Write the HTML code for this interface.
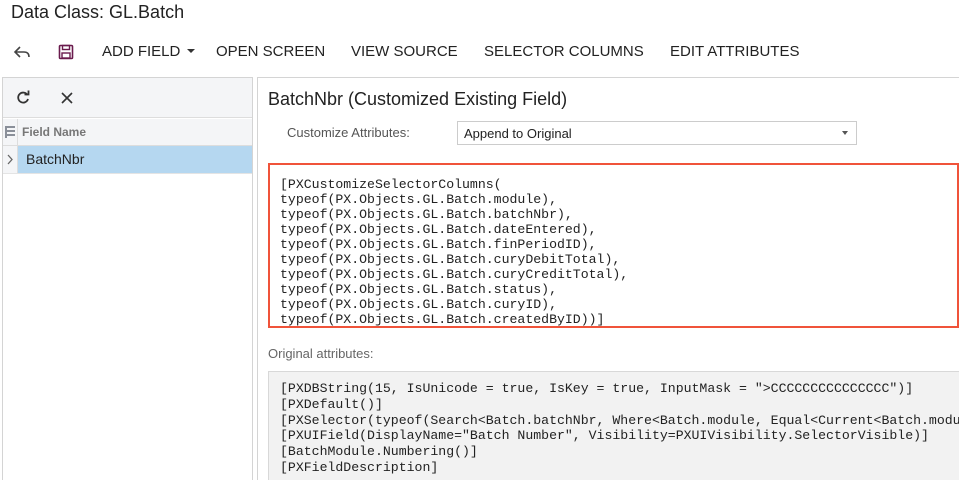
<!DOCTYPE html>
<html><head><style>
*{margin:0;padding:0;box-sizing:border-box}
html,body{width:959px;height:480px;overflow:hidden}
body{background:#fff;font-family:"Liberation Sans",Arial,sans-serif;color:#222;position:relative}
.a{position:absolute;white-space:nowrap}
.tb{font-size:15px;color:#222;top:43px}
.mono{font-family:"Liberation Mono","Courier New",monospace;font-size:13.2px;line-height:15px;white-space:pre;color:#222}
</style></head><body>
<div class="a" style="left:11px;top:2px;font-size:18px;color:#222">Data Class: GL.Batch</div>
<svg class="a" style="left:13px;top:44px" width="20" height="16" viewBox="0 0 20 16"><path d="M7 3 L2 8 L7 13 M2 8 H11 Q16 8 16 13" fill="none" stroke="#444" stroke-width="1.6"/></svg>
<svg class="a" style="left:58px;top:44px" width="16" height="16" viewBox="0 0 16 16"><rect x="1.5" y="1.5" width="13" height="13" rx="1" fill="none" stroke="#6a1b4d" stroke-width="1.6"/><rect x="4.5" y="1.5" width="7" height="4" fill="none" stroke="#6a1b4d" stroke-width="1.4"/><rect x="4" y="9" width="8" height="5" fill="none" stroke="#6a1b4d" stroke-width="1.4"/></svg>
<div class="a tb" style="left:102px">ADD FIELD</div>
<div class="a" style="left:187px;top:49px;width:0;height:0;border-left:4px solid transparent;border-right:4px solid transparent;border-top:4px solid #333"></div>
<div class="a tb" style="left:216px">OPEN SCREEN</div>
<div class="a tb" style="left:351px">VIEW SOURCE</div>
<div class="a tb" style="left:484px">SELECTOR COLUMNS</div>
<div class="a tb" style="left:670px">EDIT ATTRIBUTES</div>

<div class="a" style="left:2px;top:77px;width:251px;height:403px;border:1px solid #d4d4d4;border-bottom:none"></div>
<div class="a" style="left:3px;top:78px;width:249px;height:40px;background:#f4f5f7;border-bottom:1px solid #ddd"></div>
<svg class="a" style="left:15px;top:90px" width="16" height="16" viewBox="0 0 16 16"><path d="M12.5 5 A5 5 0 1 0 13 9" fill="none" stroke="#333" stroke-width="1.8"/><path d="M9.5 4.5 H13.5 V0.5" fill="none" stroke="#333" stroke-width="1.8"/></svg>
<svg class="a" style="left:60px;top:91px" width="14" height="14" viewBox="0 0 14 14"><path d="M2 2 L12 12 M12 2 L2 12" stroke="#333" stroke-width="1.6"/></svg>
<div class="a" style="left:3px;top:119px;width:249px;height:27px;background:#f4f5f7;border-bottom:1px solid #ddd"></div>
<div class="a" style="left:17px;top:119px;width:1px;height:54px;background:#ddd"></div>
<svg class="a" style="left:4px;top:125px" width="12" height="14" viewBox="0 0 12 14"><rect x="1" y="1" width="10" height="2" fill="#8a8f99"/><rect x="3" y="5" width="8" height="2" fill="#8a8f99"/><rect x="1" y="9" width="10" height="2" fill="#8a8f99"/><rect x="1" y="1" width="2" height="12" fill="#8a8f99"/></svg>
<div class="a" style="left:22px;top:125px;font-size:12px;font-weight:bold;color:#777">Field Name</div>
<div class="a" style="left:18px;top:146px;width:234px;height:27px;background:#b5d7f0"></div>
<div class="a" style="left:3px;top:146px;width:14px;height:27px;background:#f4f5f7"></div>
<svg class="a" style="left:6px;top:154px" width="8" height="11" viewBox="0 0 8 11"><path d="M2 1 L6 5.5 L2 10" fill="none" stroke="#666" stroke-width="1.3"/></svg>
<div class="a" style="left:26px;top:151px;font-size:14px;color:#222">BatchNbr</div>
<div class="a" style="left:3px;top:173px;width:249px;height:1px;background:#e4e4e4"></div>

<div class="a" style="left:257px;top:77px;width:702px;height:403px;border:1px solid #d4d4d4;border-right:none;border-bottom:none"></div>
<div class="a" style="left:268px;top:89px;font-size:18px;color:#222">BatchNbr (Customized Existing Field)</div>
<div class="a" style="left:287px;top:125px;font-size:13px;color:#555">Customize Attributes:</div>
<div class="a" style="left:457px;top:121px;width:400px;height:24px;border:1px solid #ccc"></div>
<div class="a" style="left:464px;top:126px;font-size:13px;color:#222">Append to Original</div>
<div class="a" style="left:842px;top:131px;width:0;height:0;border-left:3.5px solid transparent;border-right:3.5px solid transparent;border-top:4px solid #555"></div>
<div class="a" style="left:268px;top:163px;width:691px;height:165px;border:2px solid #f0533a"></div>
<div class="a mono" style="left:280px;top:177px">[PXCustomizeSelectorColumns(
typeof(PX.Objects.GL.Batch.module),
typeof(PX.Objects.GL.Batch.batchNbr),
typeof(PX.Objects.GL.Batch.dateEntered),
typeof(PX.Objects.GL.Batch.finPeriodID),
typeof(PX.Objects.GL.Batch.curyDebitTotal),
typeof(PX.Objects.GL.Batch.curyCreditTotal),
typeof(PX.Objects.GL.Batch.status),
typeof(PX.Objects.GL.Batch.curyID),
typeof(PX.Objects.GL.Batch.createdByID))]</div>
<div class="a" style="left:268px;top:346px;font-size:13px;color:#666">Original attributes:</div>
<div class="a" style="left:268px;top:371px;width:691px;height:109px;background:#f2f2f2;border:1px solid #d8d8d8;border-right:none;border-bottom:none;overflow:hidden">
<div class="a mono" style="left:11px;top:9px;line-height:15.8px">[PXDBString(15, IsUnicode = true, IsKey = true, InputMask = "&gt;CCCCCCCCCCCCCCC")]
[PXDefault()]
[PXSelector(typeof(Search&lt;Batch.batchNbr, Where&lt;Batch.module, Equal&lt;Current&lt;Batch.module&gt;&gt;&gt;&gt;))]
[PXUIField(DisplayName="Batch Number", Visibility=PXUIVisibility.SelectorVisible)]
[BatchModule.Numbering()]
[PXFieldDescription]</div></div>
</body></html>
